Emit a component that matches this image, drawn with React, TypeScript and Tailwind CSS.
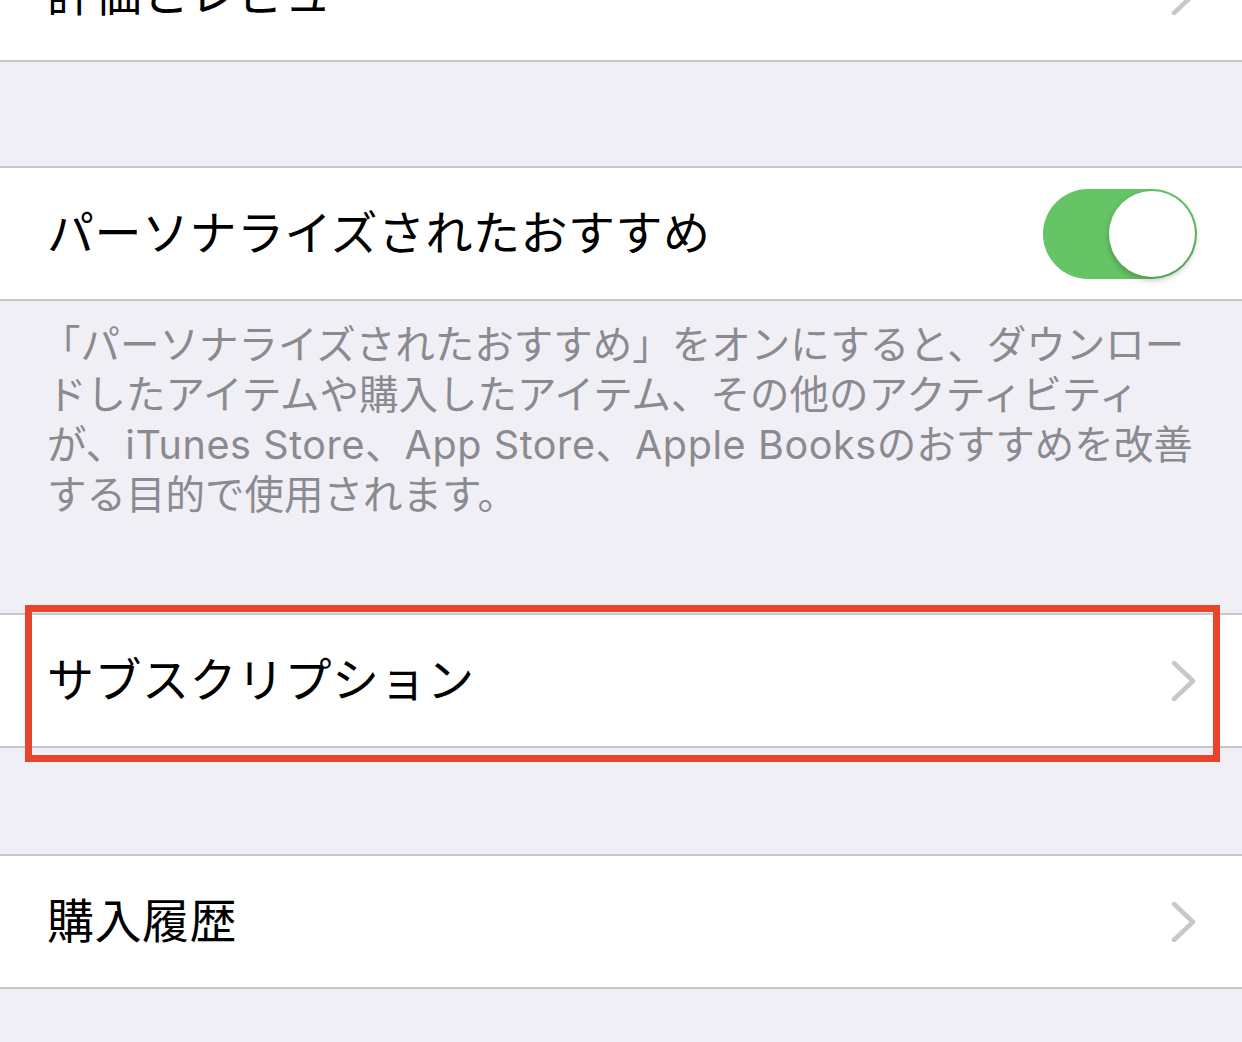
const font = { fontFamily: '"Noto Sans CJK JP", "Noto Sans", sans-serif' };
const footFont = { fontFamily: 'Inter, "Noto Sans CJK JP", sans-serif' };

function Chevron() {
  return (
    <svg width="26" height="40" viewBox="0 0 26 40" fill="none" className="shrink-0">
      <path d="M3 2 L22 20 L3 38" stroke="#c7c7cc" strokeWidth="4.5" strokeLinecap="round" strokeLinejoin="round" />
    </svg>
  );
}

function Row({ label, children }: { label: string; children?: React.ReactNode }) {
  return (
    <div className="flex h-[131px] items-center justify-between bg-white pl-[47px] pr-[45px]">
      <span className="mb-[8px] text-[47px] leading-none tracking-[0.5px] text-black">{label}</span>
      {children ?? <Chevron />}
    </div>
  );
}

function Toggle() {
  return (
    <div className="relative h-[90px] w-[154px] rounded-full bg-[#65c466]">
      <div className="absolute right-[2px] top-[2px] h-[86px] w-[86px] rounded-full bg-white shadow-[0_3px_6px_rgba(0,0,0,0.25)]" />
    </div>
  );
}

export default function App() {
  return (
    <div className="relative h-[1042px] w-[1242px] overflow-hidden bg-[#f0eff5]" style={font}>
      <div className="-mt-[71px] border-b-2 border-[#c8c7cc]">
        <Row label="評価とレビュー" />
      </div>

      <div className="h-[104px]" />

      <div className="border-y-2 border-[#c8c7cc]">
        <Row label="パーソナライズされたおすすめ">
          <Toggle />
        </Row>
      </div>

      <div
        className="h-[312px] px-[47px] pt-[19px] text-[39.5px] leading-[50px] text-[#8a8a8f]"
        style={footFont}
      >
        <span className="block whitespace-nowrap -ml-[6px]">「パーソナライズされたおすすめ」をオンにすると、ダウンロー</span>
        <span className="block whitespace-nowrap">ドしたアイテムや購入したアイテム、その他のアクティビティ</span>
        <span className="block whitespace-nowrap">
          が、<span className="tracking-[0.6px]">iTunes Store</span>、<span className="tracking-[0.6px]">App Store</span>、<span className="tracking-[0.6px]">Apple Books</span>のおすすめを改善
        </span>
        <span className="block whitespace-nowrap">する目的で使用されます。</span>
      </div>

      <div className="border-y-2 border-[#c8c7cc]">
        <Row label="サブスクリプション" />
      </div>

      <div className="h-[106px]" />

      <div className="border-y-2 border-[#c8c7cc]">
        <Row label="購入履歴" />
      </div>

      <div className="pointer-events-none absolute left-[25px] top-[605px] h-[157px] w-[1195px] border-[7px] border-[#e8432b]" />
    </div>
  );
}
